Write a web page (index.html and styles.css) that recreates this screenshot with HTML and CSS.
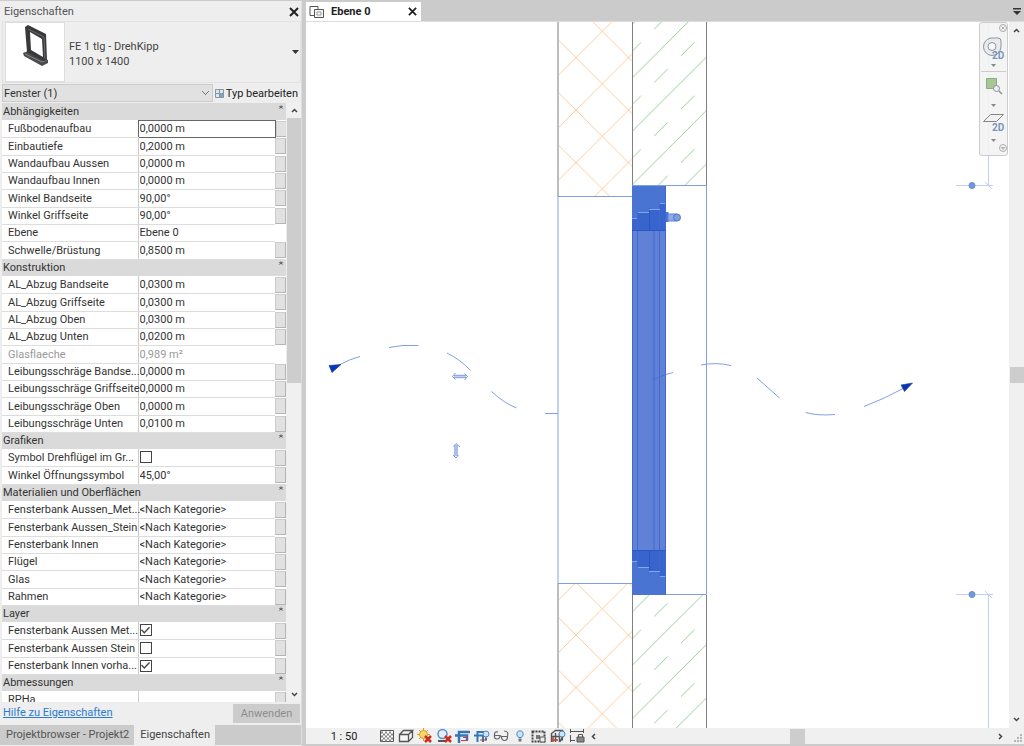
FILE: index.html
```html
<!DOCTYPE html>
<html lang="de">

<head>
    <meta charset="UTF-8">
    <meta name="viewport" content="width=device-width, initial-scale=1.0">
    <title>Ebene 0</title>
    <link rel="stylesheet" href="styles.css">
</head>

<body>
    <aside class="palette">
        <header class="palette-title">
            <span>Eigenschaften</span>
            <button type="button" class="close" aria-label="Schließen">
                <svg width="10" height="10" viewBox="0 0 10 10"><path d="M1 1l8 8M9 1l-8 8" /></svg>
            </button>
        </header>
        <button type="button" class="type-picker">
            <span class="thumb">
                <svg width="58" height="58" viewBox="0 0 58 58">
                    <path d="M17 30l5-2 20 9v3l-6 3-18-10z" fill="#4b4b4d" />
                    <path d="M19 31l17 8 5-2" fill="none" stroke="#858587" />
                    <path fill-rule="evenodd" d="M19 4l3-2 18 9 1 26-3 1-17-9zM24 9l1 18 12 7-1-18z" fill="#38383b" />
                    <path d="M22 6l16 8 1 22" fill="none" stroke="#6c6c70" />
                </svg>
            </span>
            <span class="type-name">FE 1 tlg - DrehKipp<br>1100 x 1400</span>
            <svg class="caret" width="7" height="4" viewBox="0 0 7 4"><path d="M0 0h7L3.500 4z" fill="#333" /></svg>
        </button>
        <div class="filter">
            <select aria-label="Elementfilter">
                <option>Fenster (1)</option>
            </select>
            <button type="button" class="edit-type">
                <svg width="9" height="9" viewBox="0 0 9 9">
                    <path d="M.5.5h8v8h-8zM.5 4.500h8M4.500.5v8" fill="#dbe7ee" stroke="#8595a2" />
                    <path d="M5 5h3v3H5z" fill="#7da5c4" />
                </svg>
                Typ bearbeiten
            </button>
        </div>
        <div class="list">
            <div class="list-view">
                <table>
                    <colgroup>
                        <col class="col-name">
                        <col>
                        <col class="col-btn">
                    </colgroup>
                    <tbody>
                        <tr class="group"><th colspan="2">Abhängigkeiten</th><td><button type="button" aria-label="Einklappen">«</button></td></tr>
                        <tr class="current"><th><label for="p1">Fußbodenaufbau</label></th><td><input type="text" id="p1" value="0,0000 m"></td><td><button type="button" aria-label="Zuordnen"></button></td></tr>
                        <tr><th><label for="p2">Einbautiefe</label></th><td><input type="text" id="p2" value="0,2000 m"></td><td><button type="button" aria-label="Zuordnen"></button></td></tr>
                        <tr><th><label for="p3">Wandaufbau Aussen</label></th><td><input type="text" id="p3" value="0,0000 m"></td><td><button type="button" aria-label="Zuordnen"></button></td></tr>
                        <tr><th><label for="p4">Wandaufbau Innen</label></th><td><input type="text" id="p4" value="0,0000 m"></td><td><button type="button" aria-label="Zuordnen"></button></td></tr>
                        <tr><th><label for="p5">Winkel Bandseite</label></th><td><input type="text" id="p5" value="90,00°"></td><td><button type="button" aria-label="Zuordnen"></button></td></tr>
                        <tr><th><label for="p6">Winkel Griffseite</label></th><td><input type="text" id="p6" value="90,00°"></td><td><button type="button" aria-label="Zuordnen"></button></td></tr>
                        <tr><th><label for="p7">Ebene</label></th><td><input type="text" id="p7" value="Ebene 0"></td><td></td></tr>
                        <tr><th><label for="p8">Schwelle/Brüstung</label></th><td><input type="text" id="p8" value="0,8500 m"></td><td><button type="button" aria-label="Zuordnen"></button></td></tr>
                    </tbody>
                    <tbody>
                        <tr class="group"><th colspan="2">Konstruktion</th><td><button type="button" aria-label="Einklappen">«</button></td></tr>
                        <tr><th><label for="p9">AL_Abzug Bandseite</label></th><td><input type="text" id="p9" value="0,0300 m"></td><td><button type="button" aria-label="Zuordnen"></button></td></tr>
                        <tr><th><label for="p10">AL_Abzug Griffseite</label></th><td><input type="text" id="p10" value="0,0300 m"></td><td><button type="button" aria-label="Zuordnen"></button></td></tr>
                        <tr><th><label for="p11">AL_Abzug Oben</label></th><td><input type="text" id="p11" value="0,0300 m"></td><td><button type="button" aria-label="Zuordnen"></button></td></tr>
                        <tr><th><label for="p12">AL_Abzug Unten</label></th><td><input type="text" id="p12" value="0,0200 m"></td><td><button type="button" aria-label="Zuordnen"></button></td></tr>
                        <tr class="readonly"><th><label for="p13">Glasflaeche</label></th><td><input type="text" id="p13" value="0,989 m²" readonly></td><td></td></tr>
                        <tr><th><label for="p14">Leibungsschräge Bandse...</label></th><td><input type="text" id="p14" value="0,0000 m"></td><td><button type="button" aria-label="Zuordnen"></button></td></tr>
                        <tr><th><label for="p15">Leibungsschräge Griffseite</label></th><td><input type="text" id="p15" value="0,0000 m"></td><td><button type="button" aria-label="Zuordnen"></button></td></tr>
                        <tr><th><label for="p16">Leibungsschräge Oben</label></th><td><input type="text" id="p16" value="0,0000 m"></td><td><button type="button" aria-label="Zuordnen"></button></td></tr>
                        <tr><th><label for="p17">Leibungsschräge Unten</label></th><td><input type="text" id="p17" value="0,0100 m"></td><td><button type="button" aria-label="Zuordnen"></button></td></tr>
                    </tbody>
                    <tbody>
                        <tr class="group"><th colspan="2">Grafiken</th><td><button type="button" aria-label="Einklappen">«</button></td></tr>
                        <tr><th><label for="p18">Symbol Drehflügel im Gr...</label></th><td><input type="checkbox" id="p18"></td><td><button type="button" aria-label="Zuordnen"></button></td></tr>
                        <tr><th><label for="p19">Winkel Öffnungssymbol</label></th><td><input type="text" id="p19" value="45,00°"></td><td><button type="button" aria-label="Zuordnen"></button></td></tr>
                    </tbody>
                    <tbody>
                        <tr class="group"><th colspan="2">Materialien und Oberflächen</th><td><button type="button" aria-label="Einklappen">«</button></td></tr>
                        <tr><th><label for="p20">Fensterbank Aussen_Met...</label></th><td><input type="text" id="p20" value="&lt;Nach Kategorie&gt;"></td><td><button type="button" aria-label="Zuordnen"></button></td></tr>
                        <tr><th><label for="p21">Fensterbank Aussen_Stein</label></th><td><input type="text" id="p21" value="&lt;Nach Kategorie&gt;"></td><td><button type="button" aria-label="Zuordnen"></button></td></tr>
                        <tr><th><label for="p22">Fensterbank Innen</label></th><td><input type="text" id="p22" value="&lt;Nach Kategorie&gt;"></td><td><button type="button" aria-label="Zuordnen"></button></td></tr>
                        <tr><th><label for="p23">Flügel</label></th><td><input type="text" id="p23" value="&lt;Nach Kategorie&gt;"></td><td><button type="button" aria-label="Zuordnen"></button></td></tr>
                        <tr><th><label for="p24">Glas</label></th><td><input type="text" id="p24" value="&lt;Nach Kategorie&gt;"></td><td><button type="button" aria-label="Zuordnen"></button></td></tr>
                        <tr><th><label for="p25">Rahmen</label></th><td><input type="text" id="p25" value="&lt;Nach Kategorie&gt;"></td><td><button type="button" aria-label="Zuordnen"></button></td></tr>
                    </tbody>
                    <tbody>
                        <tr class="group"><th colspan="2">Layer</th><td><button type="button" aria-label="Einklappen">«</button></td></tr>
                        <tr><th><label for="p26">Fensterbank Aussen Met...</label></th><td><input type="checkbox" id="p26" checked></td><td><button type="button" aria-label="Zuordnen"></button></td></tr>
                        <tr><th><label for="p27">Fensterbank Aussen Stein</label></th><td><input type="checkbox" id="p27"></td><td><button type="button" aria-label="Zuordnen"></button></td></tr>
                        <tr><th><label for="p28">Fensterbank Innen vorha...</label></th><td><input type="checkbox" id="p28" checked></td><td><button type="button" aria-label="Zuordnen"></button></td></tr>
                    </tbody>
                    <tbody>
                        <tr class="group"><th colspan="2">Abmessungen</th><td><button type="button" aria-label="Einklappen">«</button></td></tr>
                        <tr><th><label for="p29">RPHa</label></th><td><input type="text" id="p29" value=""></td><td><button type="button" aria-label="Zuordnen"></button></td></tr>
                    </tbody>
                </table>
            </div>
            <div class="scroll-y list-scroll">
                <svg width="7" height="5" viewBox="0 0 7 5"><path d="M1 4l2.500-2.500L6 4" /></svg>
                <span class="bar"></span>
                <svg width="7" height="5" viewBox="0 0 7 5"><path d="M1 1l2.500 2.500L6 1" /></svg>
            </div>
        </div>
        <div class="palette-foot">
            <a href="#hilfe">Hilfe zu Eigenschaften</a>
            <button type="button" disabled>Anwenden</button>
        </div>
        <nav class="palette-tabs">
            <a href="#browser">Projektbrowser - Projekt2</a>
            <a href="#eigenschaften" class="active">Eigenschaften</a>
        </nav>
    </aside>

    <main class="view">
        <div class="view-tabs">
            <div class="view-tab">
                <svg width="16" height="14" viewBox="0 0 16 14">
                    <path d="M1 1.500h8v9H1z" fill="#fff" stroke="#555" />
                    <path d="M5.500 4.500h9v8h-9z" fill="#f4f4f4" stroke="#555" />
                    <path d="M8 7h4v3H8z" fill="#fff" stroke="#999" />
                </svg>
                <a href="#ebene0">Ebene 0</a>
                <button type="button" class="close" aria-label="Ansicht schließen">
                    <svg width="9" height="9" viewBox="0 0 10 10"><path d="M1 1l8 8M9 1l-8 8" /></svg>
                </button>
            </div>
            <button type="button" class="tab-list" aria-label="Ansichten">
                <svg width="8" height="7" viewBox="0 0 8 7"><path d="M0 0h8v1.500H0zM0 3h8L4 7z" fill="#333" /></svg>
            </button>
        </div>

        <div class="stage">
            <div class="canvas">
                <svg class="drawing" viewBox="306 22 703 706" preserveAspectRatio="xMidYMid slice">
                    <defs>
                        <pattern id="insulation" x="576" y="57.600" width="52.500" height="52.500" patternUnits="userSpaceOnUse">
                            <path d="M0 0L52.500 52.500M0 52.500L52.500 0" fill="none" stroke="#ffb670" stroke-width=".7" />
                        </pattern>
                        <pattern id="concrete" x="627.600" y="82.500" width="53.400" height="53.400" patternUnits="userSpaceOnUse">
                            <path d="M0 53.400L53.400 0M0 26.700L13.400 13.300M26.700 53.400L40.100 40" fill="none" stroke="#6db870" stroke-width=".7" />
                        </pattern>
                    </defs>

                    <!-- wall layers above and below the opening -->
                    <path d="M558 22h74v175h-74zM558 583h74v145h-74z" fill="url(#insulation)" />
                    <path d="M632 22h74v164h-74zM632 595h74v133h-74z" fill="url(#concrete)" />
                    <path d="M558 22v175M558 583v145" stroke="#bdbdbd" stroke-width="2" />
                    <path d="M632.500 22v164M632.500 595v133M706.500 22v164M706.500 595v133" stroke="#808080" />

                    <!-- opening -->
                    <path d="M558 197v386" stroke="#c4d2f2" stroke-width="2" />
                    <g stroke="#7f9fe3" fill="none">
                        <path d="M558 196.500h74M558 583.500h74M632 185.500h74.500v409H632" />
                    </g>

                    <!-- window -->
                    <path d="M632 186h34v409h-34z" fill="#4a74d1" />
                    <path d="M632 231h34v319h-34z" fill="#6081d5" />
                    <path d="M632 218h5.500v-6H649v-3h11v-6h5v27.500h-33z" fill="#3765cd" />
                    <path d="M632 550h33v26h-5v-5h-11v-4h-11.500v-6H632z" fill="#3765cd" />
                    <path d="M632.500 231v319M637.500 212v355M654 231v319M659.500 203v373M665.500 186v409" stroke="#3f69ce" fill="none" />
                    <path d="M649.500 208v23M649.500 550v21M632 230.500h34M632 550.500h34" stroke="#2a58c2" fill="none" />
                    <path d="M632 218.500h5M638 212.500h11M649 209.500h11M660 203.500h5M632 561.500h5M638 567.500h11M649 571.500h11M660 576.500h5" stroke="#86a4e9" />
                    <path d="M666 212h2.500v10H666z" fill="#4a74d1" />
                    <path d="M668 214h9v7h-9z" fill="#8fa9e3" stroke="#5f84d8" />
                    <circle cx="677" cy="217.500" r="3.500" fill="#7e9de0" stroke="#4f78d4" />

                    <!-- light direction -->
                    <g stroke="#829fe3" fill="none">
                        <path d="M339 365Q350 359 360 356.500M389 347.500Q402 344.500 418.500 345.500M447 353Q461 360 470.500 370.500M491.500 391.500Q504 403 516.500 408M545 413.500h13M666 374.500L673 372.500M701 365Q716 362 731 365.500M757 378L779.500 398M805.500 412.500Q818 416 835 414.500M864 406.500Q884 399 904 388" />
                        <path d="M652 380L666 374.500" stroke="#4a72d2" />
                    </g>
                    <path d="M329 365.500l12-1-9 8zM901 385l11.500-2-8 8.500z" fill="#0537b8" stroke="#173c85" stroke-width=".6" />

                    <!-- flip controls -->
                    <path d="M454 376.500h12M456 445v11" stroke="#c2d0f2" stroke-width="2" />
                    <g fill="none" stroke="#7592dc" stroke-width=".9">
                        <path d="M454 375.300h12.500M454 377.700h12.500M455.500 373l-3 3.500 3 3M464.500 373.500l3 3-3 3.500" />
                        <path d="M454.800 445v11M457.200 445v11M453.500 446.500l2.500-3 4 3.500M453 455l3 3 2.500-3" />
                    </g>

                    <!-- dimension -->
                    <path d="M988.500 22v164M956 185.500h37M985 182l7 7M956 594.500h37M985 591l7 7M988.500 594v134" stroke="#bdcffa" fill="none" />
                    <g fill="#6b9be8" stroke="#718bb3">
                        <circle cx="972" cy="185.500" r="3" />
                        <circle cx="972" cy="594.500" r="3" />
                    </g>
                </svg>

                <div class="navbar">
                    <button type="button" class="dot" aria-label="Leiste schließen"><svg width="8" height="8" viewBox="0 0 8 8"><circle cx="4" cy="4" r="3.500" /><path d="M2.500 2.500l3 3M5.500 2.500l-3 3" /></svg></button>
                    <button type="button" aria-label="Steuerrad">
                        <svg width="24" height="26" viewBox="0 0 24 26">
                            <path d="M9 4h7q3 0 3 3v6q-1 8-9 8.500A8.800 8.800 0 0 1 9 4z" fill="#e8eaee" stroke="#8f949c" />
                            <circle cx="10" cy="12.500" r="4" fill="#f7f7f7" stroke="#8f949c" />
                            <text x="10" y="25">2D</text>
                        </svg>
                        <svg class="drop" width="5" height="3" viewBox="0 0 5 3"><path d="M0 0h5L2.500 3z" /></svg>
                    </button>
                    <hr>
                    <button type="button" aria-label="Zoom">
                        <svg width="24" height="26" viewBox="0 0 24 26">
                            <path d="M4.500 4.500h10v10h-10z" fill="#a5c894" stroke="#8dab80" />
                            <circle cx="14.500" cy="14.500" r="3" fill="#eef1f4" stroke="#8a9099" />
                            <path d="M17 17l3 3" stroke="#8a9099" stroke-width="1.500" />
                        </svg>
                        <svg class="drop" width="5" height="3" viewBox="0 0 5 3"><path d="M0 0h5L2.500 3z" /></svg>
                    </button>
                    <button type="button" aria-label="Ebene">
                        <svg width="24" height="26" viewBox="0 0 24 26">
                            <path d="M1.500 12.500l7-7h13l-7 7z" fill="#f1f1f1" stroke="#868686" />
                            <text x="10" y="22">2D</text>
                        </svg>
                        <svg class="drop" width="5" height="3" viewBox="0 0 5 3"><path d="M0 0h5L2.500 3z" /></svg>
                    </button>
                    <button type="button" class="dot" aria-label="Anpassen"><svg width="8" height="8" viewBox="0 0 8 8"><circle cx="4" cy="4" r="3.500" /><path d="M2.500 3.500h3L4 5.500z" /></svg></button>
                </div>
            </div>
            <div class="scroll-y view-scroll">
                <svg width="7" height="5" viewBox="0 0 7 5"><path d="M1 4l2.500-2.500L6 4" /></svg>
                <span class="bar"></span>
                <svg width="7" height="5" viewBox="0 0 7 5"><path d="M1 1l2.500 2.500L6 1" /></svg>
            </div>
        </div>

        <footer class="status">
            <button type="button" class="scale">1 : 50</button>
            <div class="tools">
                <button type="button" aria-label="Detaillierungsgrad"><svg viewBox="0 0 16 16"><path d="M1.500 2.500h13v11h-13z" fill="#fff" stroke="#555" /><path d="M2 4.500h12M2 8.500h12M2 12.500h12" stroke="#888" stroke-width="2" stroke-dasharray="2 2" /><path d="M4 6.500h10M4 10.500h10" stroke="#888" stroke-width="2" stroke-dasharray="2 2" /></svg></button>
                <button type="button" aria-label="Bildstil"><svg viewBox="0 0 16 16"><path d="M1.500 6.500h9v7h-9zM1.500 6.500l4-4h9l-4 4M14.500 2.500v7l-4 4" fill="#f5f5f5" stroke="#555" stroke-width="1.300" /></svg></button>
                <button type="button" aria-label="Sonnenpfad"><svg viewBox="0 0 16 16"><path d="M6.500 0v13M0 6.500h13M2 2l9 9M11 2l-9 9" stroke="#d99b28" /><circle cx="6.500" cy="6.500" r="4" fill="#ffd867" stroke="#d99b28" /><path d="M8 8l6 6M14 8l-6 6" stroke="#cf2a20" stroke-width="2.500" /></svg></button>
                <button type="button" aria-label="Schatten"><svg viewBox="0 0 16 16"><circle cx="6.500" cy="6" r="4.500" fill="#e2eef9" stroke="#5692cc" stroke-width="1.500" /><path d="M2 13h7" stroke="#555" stroke-width="2" /><path d="M9 8l6 6M15 8l-6 6" stroke="#cf2a20" stroke-width="2.500" /></svg></button>
                <button type="button" aria-label="Zuschneiden"><svg viewBox="0 0 16 16"><path d="M4 15V4h11M0 7.500h12V12" stroke="#3378b5" stroke-width="2.500" fill="none" /><path d="M6 12.500h7M8 9.500h5" stroke="#c73934" /></svg></button>
                <button type="button" aria-label="Zuschneidebereich"><svg viewBox="0 0 16 16"><path d="M3.500 14V4H10M0 7.500h9V14" stroke="#3378b5" stroke-width="2" fill="none" /><path d="M6 12h6" stroke="#c73934" /><circle cx="12" cy="6" r="3" fill="#c9e3fa" stroke="#4a89c6" /><path d="M11 9.500h2v3h-2z" fill="#666" /></svg></button>
                <button type="button" aria-label="Temporär ausblenden"><svg viewBox="0 0 16 16"><path d="M5 4Q1 3 1.500 7.500M14.500 8Q16 3 11 3" fill="none" stroke="#666" stroke-width="1.200" /><path d="M1.500 7.500h5.500q0 3.500-3 3.500t-2.500-3.500zM8.500 8.500h6q0 4-3 4t-3-4zM7 8h1.500" fill="#e8f0f5" stroke="#666" stroke-width="1.200" /></svg></button>
                <button type="button" aria-label="Verdeckte Elemente"><svg viewBox="0 0 16 16"><path d="M6.500 9.500Q4 7 5 4.500q3-3.500 6 0 1 2.500-1.500 5z" fill="#c9e3fa" stroke="#4a89c6" /><path d="M6.500 10.500h3v3h-3z" fill="#777" /></svg></button>
                <button type="button" aria-label="Ansichtseigenschaften"><svg viewBox="0 0 16 16"><path d="M1.500 3.500h12v10h-12z" fill="#e9e9e9" stroke="#444" stroke-width="2" stroke-dasharray="2 1" /><path d="M5 7h4v4H5z" fill="#777" /><path d="M9 9h5v5H9z" fill="#eee" stroke="#555" /></svg></button>
                <button type="button" aria-label="Berechnungsmodell"><svg viewBox="0 0 16 16"><path d="M1.500 14V5.500l4-3h7V10l-3 4M1.500 8.500h8M5.500 5v9M9.500 5v9" fill="none" stroke="#555" stroke-width="1.500" /><path d="M1 12h7M3 9v5" stroke="#b9413b" stroke-width="1.500" /><circle cx="12" cy="6" r="3" fill="#c9e3fa" stroke="#4a89c6" /><path d="M11 9.500h2v3h-2z" fill="#555" /></svg></button>
                <button type="button" aria-label="Abhängigkeiten anzeigen"><svg viewBox="0 0 16 16"><path d="M1.500 1v4M14.500 1v4M1 3.500h14M1.500 7v7M1 12.500h5" stroke="#555" fill="none" /><path d="M8 9h7v5H8z" fill="#888" stroke="#555" /><path d="M9.500 9V6.500h4V9" fill="none" stroke="#555" /></svg></button>
            </div>
            <div class="scroll-x">
                <svg width="5" height="7" viewBox="0 0 5 7"><path d="M4 1L1.500 3.500 4 6" /></svg>
                <span class="bar"></span>
                <svg width="5" height="7" viewBox="0 0 5 7"><path d="M1 1l2.500 2.500L1 6" /></svg>
            </div>
            <svg class="grip" width="9" height="9" viewBox="0 0 9 9"><path d="M6 0h2v2H6zM3 3h2v2H3zM6 3h2v2H6zM0 6h2v2H0zM3 6h2v2H3zM6 6h2v2H6z" fill="#b5b5b5" /></svg>
        </footer>
    </main>
</body>

</html>
```

FILE: styles.css
```css
* {
    box-sizing: border-box;
}

body {
    margin: 0;
    height: 100vh;
    display: flex;
    overflow: hidden;
    background-color: #cbcbcb;
    color: #333;
    font-family: Roboto, "Liberation Sans", sans-serif;
    font-size: 11px;
}

button,
input,
select {
    margin: 0;
    padding: 0;
    border: none;
    border-radius: 0;
    background: none;
    color: inherit;
    font: inherit;
}

svg {
    display: block;
    flex: none;
}

/* properties palette */

.palette {
    width: 302px;
    flex: none;
    display: flex;
    flex-direction: column;
    padding: 1px 0;
    background-color: #eee;
    border-right: 1px solid #ddd;
    border-top: 1px solid #ccc;
}

.palette-title {
    height: 19px;
    flex: none;
    display: flex;
    align-items: center;
    justify-content: space-between;
    padding: 0 2px 0 4px;
    color: #555;
}

.close svg {
    fill: none;
    stroke: #222;
    stroke-width: 2;
}

.type-picker {
    height: 62px;
    flex: none;
    display: flex;
    align-items: center;
    margin-left: 2px;
    padding: 0 1px 0 2px;
    border: 1px solid #e2e2e2;
    text-align: left;
    color: #444;
}

.thumb {
    width: 60px;
    height: 60px;
    background-color: #fff;
    border: 1px solid #ddd;
}

.type-name {
    flex: 1;
    padding: 3px 0 0 4px;
    line-height: 15px;
}

.filter {
    height: 20px;
    flex: none;
    display: flex;
    align-items: center;
    padding-left: 2px;
}

.filter select {
    flex: 1;
    height: 18px;
    padding-left: 1px;
    appearance: none;
    border: 1px solid #ccc;
    background-color: #e1e1e1;
    background-image: linear-gradient(45deg, transparent 45%, #777 45%, #777 60%, transparent 60%), linear-gradient(-45deg, transparent 45%, #777 45%, #777 60%, transparent 60%);
    background-size: 4px 4px;
    background-position: right 6px center, right 3px center;
    background-repeat: no-repeat;
}

.edit-type {
    display: flex;
    align-items: center;
    gap: 2px;
    padding: 0 3px 0 2px;
    color: #222;
}

.list {
    flex: 1;
    min-height: 0;
    display: flex;
    padding-left: 2px;
}

.list-view {
    flex: 1;
    overflow: hidden;
}

table {
    width: 100%;
    table-layout: fixed;
    border-collapse: collapse;
}

.col-name {
    width: 136px;
}

.col-btn {
    width: 11px;
}

tr {
    height: 17px;
    background-color: #fff;
}

tr:nth-child(3n) {
    height: 18px;
}

th,
td {
    padding: 0;
    height: inherit;
    line-height: 15px;
    text-align: left;
    font-weight: normal;
    white-space: nowrap;
    border-bottom: 1px solid #ddd;
}

th {
    padding-left: 6px;
}

td:nth-child(2) {
    border-left: 1px solid #ccc;
}

td input[type="text"] {
    display: block;
    width: 100%;
    height: 15px;
    padding-left: 1px;
}

.current td:nth-child(2) {
    border: 1px solid #666;
}

td:last-child {
    border-bottom: none;
}

td:last-child button {
    display: block;
    width: 11px;
    height: 16px;
    background-color: #e1e1e1;
    border: 1px solid #ccc;
    border-right-color: #b5b5b5;
    border-bottom-color: #b5b5b5;
}

.group,
.group button {
    background-color: #dadada;
}

.group th {
    padding-left: 1px;
    border-bottom: none;
}

tr.group td:last-child {
    border: none;
    vertical-align: top;
}

.group td:last-child button {
    width: 11px;
    height: 8px;
    border: none;
    background: none;
    font-size: 9px;
    line-height: 8px;
    transform: rotate(90deg);
}

.readonly {
    color: #999;
}

input[type="checkbox"] {
    appearance: none;
    display: block;
    width: 12px;
    height: 12px;
    margin-left: 1px;
    background-color: #fff;
    border: 1px solid #444;
}

input[type="checkbox"]:checked::before {
    content: "";
    display: block;
    width: 10px;
    height: 10px;
    background-color: #444;
    clip-path: polygon(5% 50%, 15% 40%, 38% 65%, 85% 15%, 95% 25%, 38% 85%);
}

/* scroll bars */

.scroll-y,
.scroll-x {
    display: flex;
    align-items: center;
    justify-content: space-between;
    background-color: #f0f0f0;
}

.scroll-y {
    flex-direction: column;
}

.scroll-y svg,
.scroll-x svg {
    fill: none;
    stroke: #444;
    stroke-width: 1.500;
}

.bar {
    background-color: #cdcdcd;
}

.list-scroll {
    width: 14px;
    margin-left: 1px;
    padding: 5px 0;
    justify-content: flex-start;
}

.list-scroll .bar {
    width: 14px;
    height: 45%;
    margin: 5px 0 auto;
}

.view-scroll {
    width: 15px;
    padding: 6px 0;
}

.view-scroll .bar {
    width: 14px;
    height: 16px;
}

.palette-foot {
    height: 23px;
    flex: none;
    display: flex;
    align-items: center;
    justify-content: space-between;
    padding: 0 1px 0 3px;
}

.palette-foot a {
    color: #2a7cd3;
    padding-bottom: 3px;
}

.palette-foot button {
    width: 67px;
    height: 19px;
    background-color: #ccc;
    color: #8c8c8c;
}

.palette-tabs {
    height: 20px;
    flex: none;
    display: flex;
    background-color: #cbcbcb;
}

.palette-tabs a {
    padding: 0 5px 0 6px;
    line-height: 20px;
    color: #555;
    text-decoration: none;
}

.palette-tabs .active {
    background-color: #eee;
    color: #444;
}

/* drawing view */

.view {
    flex: 1;
    min-width: 0;
    display: flex;
    flex-direction: column;
    margin-left: 4px;
    padding: 2px 0;
}

.view-tabs {
    height: 19px;
    flex: none;
    display: flex;
    justify-content: space-between;
    background-color: #cbcbcb;
}

.view-tab {
    display: flex;
    align-items: center;
    padding: 0 4px 0 3px;
    background-color: #fff;
}

.view-tab a {
    width: 83px;
    padding-left: 6px;
    color: #222;
    font-weight: bold;
    text-decoration: none;
}

.tab-list {
    padding: 0 3px;
}

.stage {
    flex: 1;
    min-height: 0;
    display: flex;
    border-top: 1px solid #ddd;
}

.canvas {
    flex: 1;
    min-width: 0;
    position: relative;
    background-color: #fff;
}

.drawing {
    width: 100%;
    height: 100%;
}

/* floats over the drawing */
.navbar {
    position: absolute;
    top: 0;
    right: 1px;
    width: 29px;
    display: flex;
    flex-direction: column;
    align-items: center;
    padding: 1px 0;
    background-color: rgba(243, 243, 243, 0.9);
    border: 1px solid #ccc;
    border-radius: 3px;
}

.navbar button {
    height: 35px;
    display: flex;
    flex-direction: column;
    align-items: center;
    justify-content: space-between;
    padding: 0 0 2px;
}

.navbar .dot {
    height: 10px;
    padding: 0;
    align-self: flex-end;
}

.dot svg {
    fill: none;
    stroke: #aaa;
}

.drop {
    fill: #888;
}

.navbar text {
    font-size: 10px;
    font-weight: bold;
    fill: #7897b8;
}

.navbar hr {
    width: 25px;
    margin: 2px 0;
    border: none;
    border-top: 1px solid #ccc;
}

.status {
    height: 16px;
    flex: none;
    display: flex;
    align-items: center;
    background-color: #f0f0f0;
}

.scale {
    width: 73px;
    padding-left: 3px;
    color: #222;
}

.tools {
    display: flex;
    gap: 3px;
}

.tools svg {
    width: 16px;
    height: 16px;
}

.scroll-x {
    flex: 1;
    padding: 0 6px;
}

.scroll-x .bar {
    width: 15px;
    height: 15px;
}

.grip {
    margin: 4px 1px 0 5px;
}
```
